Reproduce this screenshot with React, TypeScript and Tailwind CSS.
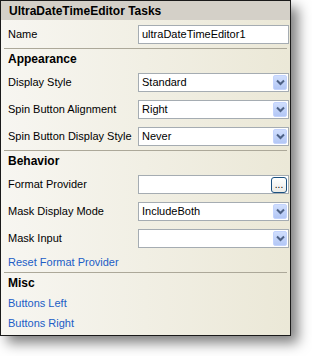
import React from "react";

const font = { fontFamily: '"Liberation Sans", Arial, sans-serif' };

function Chevron() {
  return (
    <svg width="9" height="7" viewBox="0 0 9 7">
      <path d="M1 1.5 L4.5 5 L8 1.5" fill="none" stroke="#4d6185" strokeWidth="2" />
    </svg>
  );
}

function Field({ value = "", kind }: { value?: string; kind?: "drop" | "dots" }) {
  return (
    <div className="w-[151px] h-[19px] bg-white border border-[#a5acb2] flex items-center pl-[3px] pr-[1px] shrink-0">
      <span className="flex-1 text-[11px] text-black leading-none truncate">{value}</span>
      {kind === "drop" && (
        <div className="w-[14px] h-[15px] rounded-[2px] bg-gradient-to-b from-[#d0defd] to-[#b3c7f5] border border-[#c3d3fd] flex items-center justify-center">
          <Chevron />
        </div>
      )}
      {kind === "dots" && (
        <div className="w-[16px] h-[16px] rounded-[3px] border border-[#1c5180] bg-gradient-to-b from-white to-[#ecebe6] flex items-end justify-center pb-[2px] text-[10px] leading-none text-black">
          ...
        </div>
      )}
    </div>
  );
}

function Row({ label, children }: { label: string; children?: React.ReactNode }) {
  return (
    <div className="flex items-center h-[27px] pl-[7px] pr-[1px]">
      <span className="flex-1 text-[11px] text-black">{label}</span>
      {children}
    </div>
  );
}

function Section({ title }: { title: string }) {
  return (
    <div className="h-[20px] flex items-center pl-[7px] text-[12px] font-bold text-black">{title}</div>
  );
}

function Link({ text }: { text: string }) {
  return (
    <div className="h-[20px] flex items-center pl-[7px] text-[11px] text-[#215dc6]">{text}</div>
  );
}

function Sep() {
  return <div className="mx-[3px] h-px bg-[#aca899]" />;
}

export default function App() {
  return (
    <div className="w-[312px] h-[356px] bg-white" style={font}>
      <div className="w-[291px] h-[336px] border border-[#1a1a1a] flex flex-col shadow-[7px_7px_12px_rgba(0,0,0,0.5)] bg-gradient-to-r from-[#f7f6f1] to-[#ebe8d7]">
        <div className="h-[19px] bg-[#d4d0c8] flex items-center pl-[8px] text-[12px] font-bold text-black">
          UltraDateTimeEditor Tasks
        </div>
        <div className="h-[28px] flex items-center pl-[7px] pr-[1px]">
          <span className="flex-1 text-[11px] text-black">Name</span>
          <Field value="ultraDateTimeEditor1" />
        </div>
        <Sep />
        <Section title="Appearance" />
        <Row label="Display Style"><Field value="Standard" kind="drop" /></Row>
        <Row label="Spin Button Alignment"><Field value="Right" kind="drop" /></Row>
        <Row label="Spin Button Display Style"><Field value="Never" kind="drop" /></Row>
        <Sep />
        <Section title="Behavior" />
        <Row label="Format Provider"><Field kind="dots" /></Row>
        <Row label="Mask Display Mode"><Field value="IncludeBoth" kind="drop" /></Row>
        <Row label="Mask Input"><Field kind="drop" /></Row>
        <Link text="Reset Format Provider" />
        <Sep />
        <Section title="Misc" />
        <Link text="Buttons Left" />
        <Link text="Buttons Right" />
      </div>
    </div>
  );
}
